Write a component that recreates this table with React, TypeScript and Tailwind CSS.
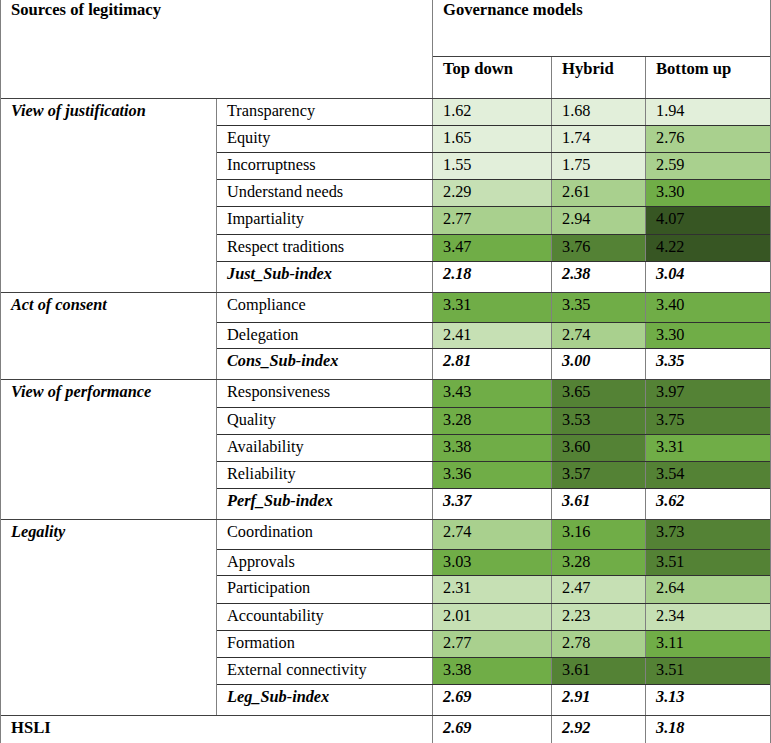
const L1 = 'bg-[#e2efda]';
const L2 = 'bg-[#c6e0b4]';
const L3 = 'bg-[#a9d08e]';
const G = 'bg-[#70ad47]';
const D1 = 'bg-[#548235]';
const D2 = 'bg-[#375623]';

type Row = { label: string; h: string; vals: [string, string][] };
type Group = { name: string; rows: Row[]; sub: { label: string; h: string; vals: string[] } };

const groups: Group[] = [
  {
    name: 'View of justification',
    rows: [
      { label: 'Transparency', h: 'h-[27px]', vals: [['1.62', L1], ['1.68', L1], ['1.94', L1]] },
      { label: 'Equity', h: 'h-[27px]', vals: [['1.65', L1], ['1.74', L1], ['2.76', L3]] },
      { label: 'Incorruptness', h: 'h-[27px]', vals: [['1.55', L1], ['1.75', L1], ['2.59', L3]] },
      { label: 'Understand needs', h: 'h-[27px]', vals: [['2.29', L2], ['2.61', L3], ['3.30', G]] },
      { label: 'Impartiality', h: 'h-[28px]', vals: [['2.77', L3], ['2.94', L3], ['4.07', D2]] },
      { label: 'Respect traditions', h: 'h-[27px]', vals: [['3.47', G], ['3.76', D1], ['4.22', D2]] },
    ],
    sub: { label: 'Just_Sub-index', h: 'h-[30px]', vals: ['2.18', '2.38', '3.04'] },
  },
  {
    name: 'Act of consent',
    rows: [
      { label: 'Compliance', h: 'h-[30px]', vals: [['3.31', G], ['3.35', G], ['3.40', G]] },
      { label: 'Delegation', h: 'h-[26px]', vals: [['2.41', L2], ['2.74', L3], ['3.30', G]] },
    ],
    sub: { label: 'Cons_Sub-index', h: 'h-[30px]', vals: ['2.81', '3.00', '3.35'] },
  },
  {
    name: 'View of performance',
    rows: [
      { label: 'Responsiveness', h: 'h-[28px]', vals: [['3.43', G], ['3.65', D1], ['3.97', D1]] },
      { label: 'Quality', h: 'h-[27px]', vals: [['3.28', G], ['3.53', D1], ['3.75', D1]] },
      { label: 'Availability', h: 'h-[27px]', vals: [['3.38', G], ['3.60', D1], ['3.31', G]] },
      { label: 'Reliability', h: 'h-[27px]', vals: [['3.36', G], ['3.57', D1], ['3.54', D1]] },
    ],
    sub: { label: 'Perf_Sub-index', h: 'h-[30px]', vals: ['3.37', '3.61', '3.62'] },
  },
  {
    name: 'Legality',
    rows: [
      { label: 'Coordination', h: 'h-[30px]', vals: [['2.74', L3], ['3.16', G], ['3.73', D1]] },
      { label: 'Approvals', h: 'h-[26px]', vals: [['3.03', G], ['3.28', G], ['3.51', D1]] },
      { label: 'Participation', h: 'h-[28px]', vals: [['2.31', L2], ['2.47', L2], ['2.64', L3]] },
      { label: 'Accountability', h: 'h-[27px]', vals: [['2.01', L2], ['2.23', L2], ['2.34', L2]] },
      { label: 'Formation', h: 'h-[27px]', vals: [['2.77', L3], ['2.78', L3], ['3.11', G]] },
      { label: 'External connectivity', h: 'h-[27px]', vals: [['3.38', G], ['3.61', D1], ['3.51', D1]] },
    ],
    sub: { label: 'Leg_Sub-index', h: 'h-[30px]', vals: ['2.69', '2.91', '3.13'] },
  },
];

const widths = ['w-[119px]', 'w-[94px]', 'flex-1'];
const vline = 'border-r border-[#808080]';
const cell = 'px-[10px] pt-[3px]';

export default function App() {
  return (
    <div className="w-[771px] bg-white text-[16.3px] leading-[18px] text-black border-l border-r border-[#808080]" style={{ fontFamily: '"Liberation Serif", "Times New Roman", serif' }}>
      {/* header */}
      <div className="flex h-[99px] border-b border-[#404040] text-[16.6px] font-bold">
        <div className={`w-[432px] ${vline} px-[10px] pt-[1px]`}>Sources of legitimacy</div>
        <div className="flex-1 flex flex-col">
          <div className="h-[57px] border-b border-[#404040] px-[10px] pt-[1px]">Governance models</div>
          <div className="flex-1 flex">
            <div className={`w-[119px] ${vline} px-[10px] pt-[3px]`}>Top down</div>
            <div className={`w-[94px] ${vline} px-[10px] pt-[3px]`}>Hybrid</div>
            <div className="flex-1 px-[10px] pt-[3px]">Bottom up</div>
          </div>
        </div>
      </div>

      {groups.map(g => (
        <div key={g.name} className="flex border-b border-[#404040]">
          <div className={`w-[216px] ${vline} ${cell} font-bold italic`}>{g.name}</div>
          <div className="flex-1 flex flex-col">
            {g.rows.map(r => (
              <div key={r.label} className={`flex ${r.h} border-b border-[#303030]`}>
                <div className={`w-[216px] ${vline} ${cell}`}>{r.label}</div>
                {r.vals.map(([v, bg], i) => (
                  <div key={i} className={`${widths[i]} ${bg} ${i < 2 ? vline : ''} ${cell}`}>{v}</div>
                ))}
              </div>
            ))}
            <div className={`flex ${g.sub.h} font-bold italic`}>
              <div className={`w-[216px] ${vline} ${cell}`}>{g.sub.label}</div>
              {g.sub.vals.map((v, i) => (
                <div key={i} className={`${widths[i]} ${i < 2 ? vline : ''} ${cell}`}>{v}</div>
              ))}
            </div>
          </div>
        </div>
      ))}

      <div className="flex h-[31px] border-b border-[#404040]">
        <div className={`w-[432px] ${vline} ${cell} font-bold text-[16.6px]`}>HSLI</div>
        {['2.69', '2.92', '3.18'].map((v, i) => (
          <div key={i} className={`${widths[i]} ${i < 2 ? vline : ''} ${cell} font-bold italic`}>{v}</div>
        ))}
      </div>
    </div>
  );
}
